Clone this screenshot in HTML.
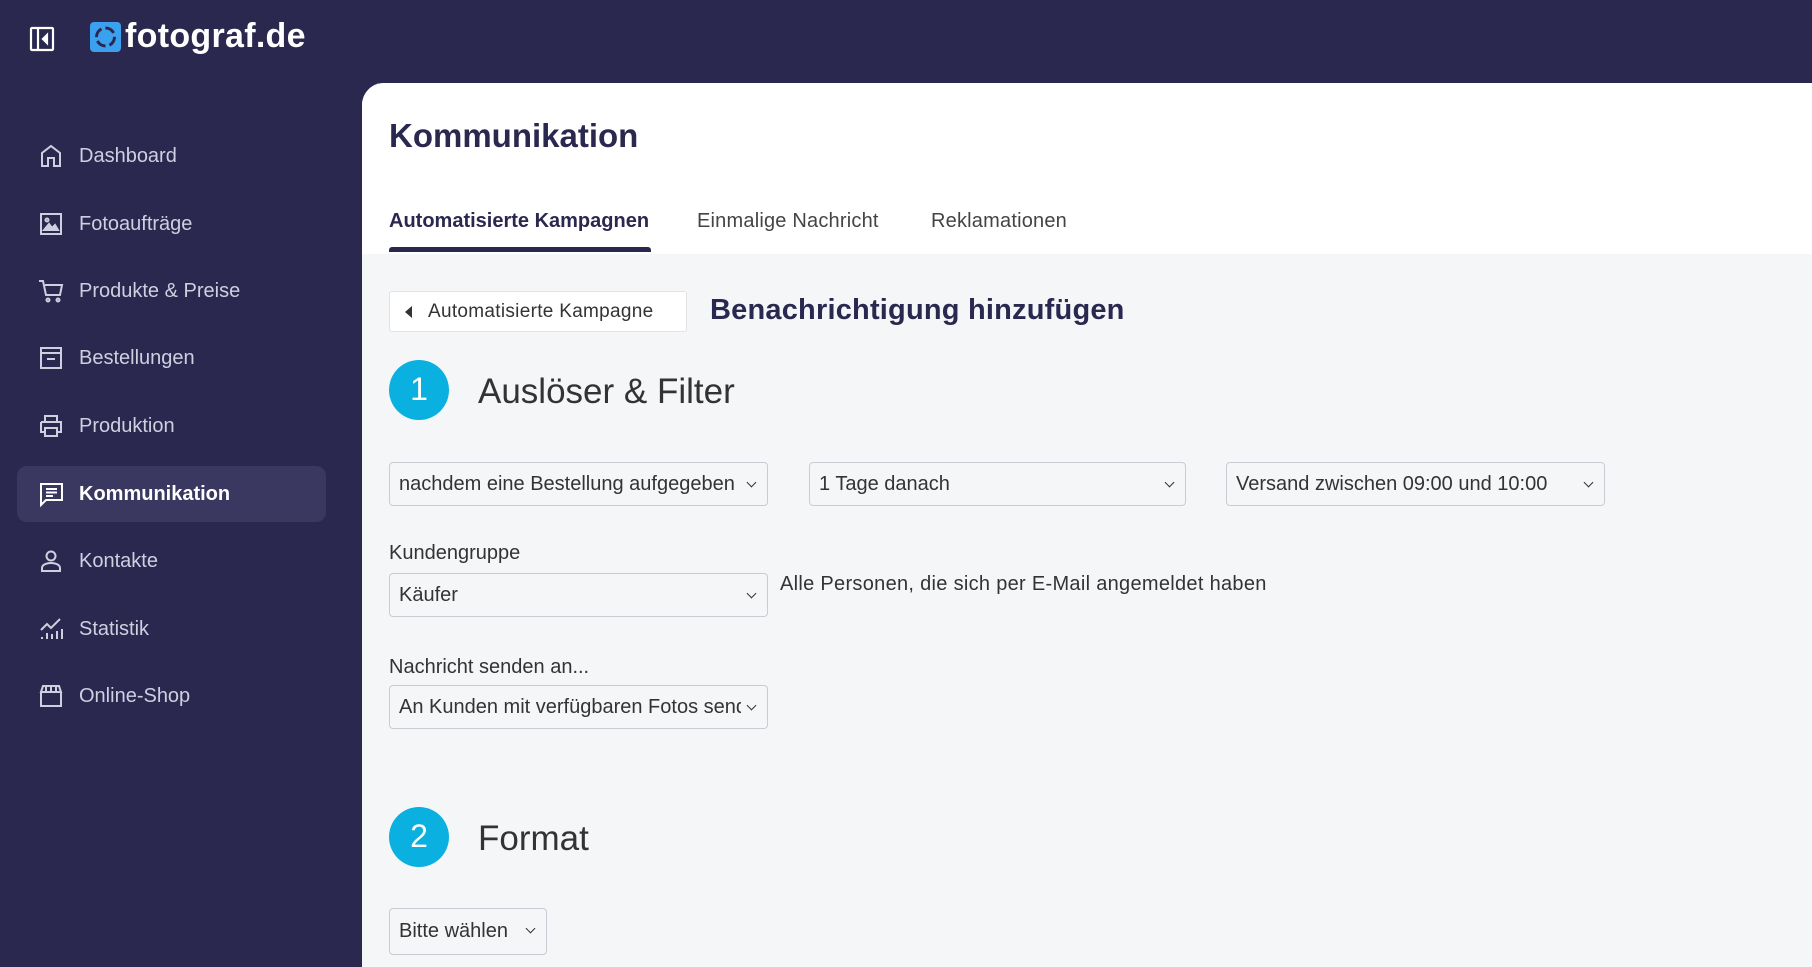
<!DOCTYPE html>
<html><head><meta charset="utf-8"><style>
*{box-sizing:border-box;margin:0;padding:0}
body{width:1812px;height:967px;overflow:hidden;background:#2b2850;font-family:"Liberation Sans",sans-serif;position:relative}
.abs{position:absolute}
.nav{position:absolute;left:17px;width:309px;height:56px;display:flex;align-items:center;color:#cfcfe0;font-size:20px}
.nav svg{position:absolute;left:20px;width:28px;height:28px;fill:none;stroke:#cfcfe0;stroke-width:2}
.nav span{position:absolute;left:62px}
.nav.act{background:#3a3760;border-radius:10px;color:#fff;font-weight:bold}
.nav.act svg{stroke:#fff}
.main{position:absolute;left:362px;top:83px;width:1450px;height:884px;background:#f5f6f8;border-top-left-radius:22px;overflow:hidden}
.top{position:absolute;left:0;top:0;width:100%;height:171px;background:#fff}
.sel{position:absolute;height:44px;background:#f5f6f8;border:1px solid #c9ccd2;border-radius:4px;font-size:20px;color:#333;padding-left:9px;padding-right:26px;line-height:42px;white-space:nowrap;overflow:hidden}
.sel span{display:block;overflow:hidden}
.sel:after{content:"";position:absolute;right:12px;top:16px;width:6px;height:6px;border-right:1.6px solid #333;border-bottom:1.6px solid #333;transform:rotate(45deg)}
.circ{position:absolute;width:60px;height:60px;border-radius:50%;background:#0ab0e0;color:#fff;font-size:32px;text-align:center;line-height:58px}
.h{position:absolute;font-size:35px;color:#333}
.lbl{position:absolute;font-size:20px;color:#333}
</style></head><body>
<svg class="abs" style="left:29px;top:26px" width="26" height="26" viewBox="0 0 26 26" fill="none" stroke="#fff" stroke-width="2.2"><rect x="2" y="2" width="22" height="22" rx="1"/><line x1="9" y1="2" x2="9" y2="24"/><path d="M18 9 L14 13 L18 17Z" fill="#fff"/></svg>
<svg class="abs" style="left:90px;top:22px" width="31" height="30" viewBox="0 0 31 30"><rect x="0" y="0" width="31" height="30" rx="4" fill="#3ba0ee"/><circle cx="15.5" cy="15" r="9" fill="none" stroke="#2b2850" stroke-width="3" stroke-dasharray="10 4"/></svg>
<div class="abs" style="left:125px;top:17px;font-size:34px;font-weight:bold;color:#fff;letter-spacing:0.3px">fotograf.de</div>

<div class="nav" style="top:128px"><svg viewBox="0 0 28 28"><path d="M5 24V11L14 4l9 7v13h-6v-8h-6v8z"/></svg><span>Dashboard</span></div>
<div class="nav" style="top:196px"><svg viewBox="0 0 28 28"><rect x="4" y="4" width="20" height="20"/><path d="M7 20l5-6 3 4 3-3 3 5z" fill="#cfcfe0"/><circle cx="10" cy="10" r="1.5"/></svg><span>Fotoaufträge</span></div>
<div class="nav" style="top:263px"><svg viewBox="0 0 28 28"><path d="M2 4h4l3 14h14l2-10H8"/><circle cx="11" cy="23" r="1.5"/><circle cx="21" cy="23" r="1.5"/></svg><span>Produkte &amp; Preise</span></div>
<div class="nav" style="top:330px"><svg viewBox="0 0 28 28"><path d="M4 4h20v20H4z M4 9h20 M10 15h8"/></svg><span>Bestellungen</span></div>
<div class="nav" style="top:398px"><svg viewBox="0 0 28 28"><path d="M8 10V4h12v6 M4 10h20v10h-4 M8 20H4V10 M8 16h12v8H8z"/></svg><span>Produktion</span></div>
<div class="nav act" style="top:466px"><svg viewBox="0 0 28 28"><path d="M4 4h21v16H9l-5 5z M9 9h11 M9 12.5h11 M9 16h7"/></svg><span>Kommunikation</span></div>
<div class="nav" style="top:533px"><svg viewBox="0 0 28 28"><circle cx="14" cy="9" r="4.5"/><path d="M5 24v-3c0-3 4-5 9-5s9 2 9 5v3z"/></svg><span>Kontakte</span></div>
<div class="nav" style="top:601px"><svg viewBox="0 0 28 28"><path d="M4 15l6-6 4 4 9-9 M5 24v-2 M10 24v-6 M15 24v-5 M20 24v-8 M25 24v-10"/></svg><span>Statistik</span></div>
<div class="nav" style="top:668px"><svg viewBox="0 0 28 28"><path d="M4 10l2-6h16l2 6z M4 10v14h20V10 M9 4v6 M14 4v6 M19 4v6"/></svg><span>Online-Shop</span></div>

<div class="main">
<div class="top">
<div class="abs" style="left:27px;top:34px;font-size:33px;font-weight:bold;color:#2b2850">Kommunikation</div>
<div class="abs" style="left:27px;top:127px;font-size:20px;font-weight:bold;color:#2b2850">Automatisierte Kampagnen</div>
<div class="abs" style="left:27px;top:164px;width:262px;height:5px;background:#2b2850;border-radius:3px 3px 0 0"></div>
<div class="abs" style="left:335px;top:127px;font-size:20px;color:#444;letter-spacing:0.2px">Einmalige Nachricht</div>
<div class="abs" style="left:569px;top:127px;font-size:20px;color:#444;letter-spacing:0.2px">Reklamationen</div>
</div>
<div class="abs" style="left:27px;top:208px;width:298px;height:41px;background:#fff;border:1px solid #e1e3e6;border-radius:3px;font-size:19px;color:#333;line-height:39px;padding-left:38px;letter-spacing:0.3px">Automatisierte Kampagne</div>
<div class="abs" style="left:43px;top:223px;width:0;height:0;border-top:6px solid transparent;border-bottom:6px solid transparent;border-right:7px solid #333"></div>
<div class="abs" style="left:348px;top:211px;font-size:29px;font-weight:bold;color:#2b2850;letter-spacing:0.2px">Benachrichtigung hinzufügen</div>
<div class="circ" style="left:27px;top:277px">1</div>
<div class="h" style="left:116px;top:289px">Auslöser &amp; Filter</div>
<div class="sel" style="left:27px;top:379px;width:379px"><span>nachdem eine Bestellung aufgegeben</span></div>
<div class="sel" style="left:447px;top:379px;width:377px"><span>1 Tage danach</span></div>
<div class="sel" style="left:864px;top:379px;width:379px"><span>Versand zwischen 09:00 und 10:00</span></div>
<div class="lbl" style="left:27px;top:459px">Kundengruppe</div>
<div class="sel" style="left:27px;top:490px;width:379px"><span>Käufer</span></div>
<div class="lbl" style="left:418px;top:490px;letter-spacing:0.3px">Alle Personen, die sich per E-Mail angemeldet haben</div>
<div class="lbl" style="left:27px;top:573px">Nachricht senden an...</div>
<div class="sel" style="left:27px;top:602px;width:379px"><span>An Kunden mit verfügbaren Fotos senden</span></div>
<div class="circ" style="left:27px;top:724px">2</div>
<div class="h" style="left:116px;top:736px">Format</div>
<div class="sel" style="left:27px;top:825px;width:158px;height:47px;line-height:45px"><span>Bitte wählen</span></div>
</div>
</body></html>
